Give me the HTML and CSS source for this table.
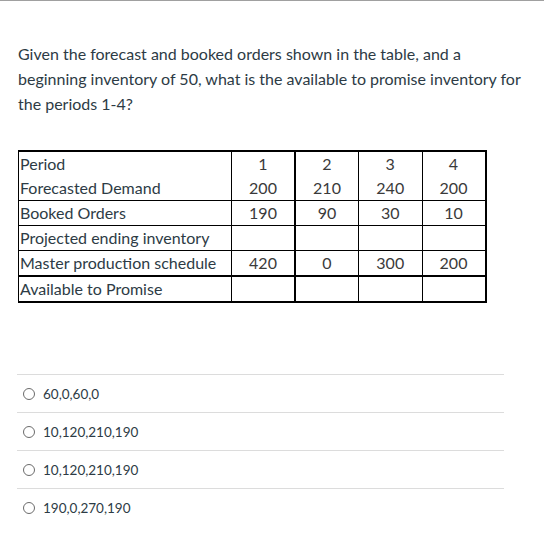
FILE: index.html
```html
<!DOCTYPE html>
<html>
<head>
<meta charset="utf-8">
<link rel="stylesheet" href="styles.css">
</head>
<body>
<div class="page">
  <p class="question">Given the forecast and booked orders shown in the table, and a beginning inventory of 50, what is the available to promise inventory for the periods 1-4?</p>
  <table class="mps">
    <colgroup>
      <col class="c-label"><col class="c-num"><col class="c-num"><col class="c-num"><col class="c-num">
    </colgroup>
    <tr class="r-head"><td>Period</td><td>1</td><td class="thick-l">2</td><td>3</td><td>4</td></tr>
    <tr class="r-fc"><td>Forecasted Demand</td><td>200</td><td class="thick-l">210</td><td>240</td><td>200</td></tr>
    <tr><td>Booked Orders</td><td>190</td><td class="thick-l">90</td><td>30</td><td>10</td></tr>
    <tr><td>Projected ending inventory</td><td></td><td class="thick-l"></td><td></td><td></td></tr>
    <tr><td>Master production schedule</td><td>420</td><td class="thick-l">0</td><td>300</td><td>200</td></tr>
    <tr class="r-atp"><td>Available to Promise</td><td></td><td class="thick-l"></td><td></td><td></td></tr>
  </table>
  <ul class="answers">
    <li class="answer"><span class="radio"></span><span class="label">60,0,60,0</span></li>
    <li class="answer"><span class="radio"></span><span class="label">10,120,210,190</span></li>
    <li class="answer"><span class="radio"></span><span class="label">10,120,210,190</span></li>
    <li class="answer"><span class="radio"></span><span class="label">190,0,270,190</span></li>
  </ul>
</div>
</body>
</html>
```

FILE: styles.css
```css
html, body {
  margin: 0;
  padding: 0;
  background: #fff;
}
body {
  font-family: Lato, "Open Sans", sans-serif;
  color: #2d3b45;
  border-top: 1px solid #a0a0a0;
}
.page {
  padding: 40px 0 0 18px;
  width: 510px;
}
.question {
  margin: 0;
  font-size: 16px;
  line-height: 25px;
}
.mps {
  margin-top: 34px;
  border-collapse: collapse;
  width: 467px;
  table-layout: fixed;
  font-size: 16px;
  border: 2px solid #000;
  border-left-width: 1px;
}
.c-label { width: 213px; }
.c-num { width: 63.5px; }
.mps td {
  border: 1px solid #000;
  height: 24px;
  padding: 0 1px;
  line-height: 24px;
  text-align: center;
  color: #3a3a3a;
  white-space: nowrap;
}
.mps td:first-child {
  text-align: left;
  color: #2d3b45;
}
.mps .thick-l { border-left-width: 2px; }
.mps .r-head td { border-bottom: none; }
.mps .r-fc td { border-top: none; }
.mps .r-atp td { border-top-width: 2px; }
.answers {
  list-style: none;
  margin: 71px 0 0 -1px;
  padding: 0;
  width: 487px;
}
.answer {
  display: flex;
  align-items: center;
  height: 37px;
  border-top: 1px solid #dcdcdc;
  font-size: 13.5px;
}
.radio {
  width: 10px;
  height: 10px;
  border: 1px solid #6b6b6b;
  border-radius: 50%;
  margin: 1px 8px 0 6px;
}
.label {
  color: #2d3b45;
}
```
